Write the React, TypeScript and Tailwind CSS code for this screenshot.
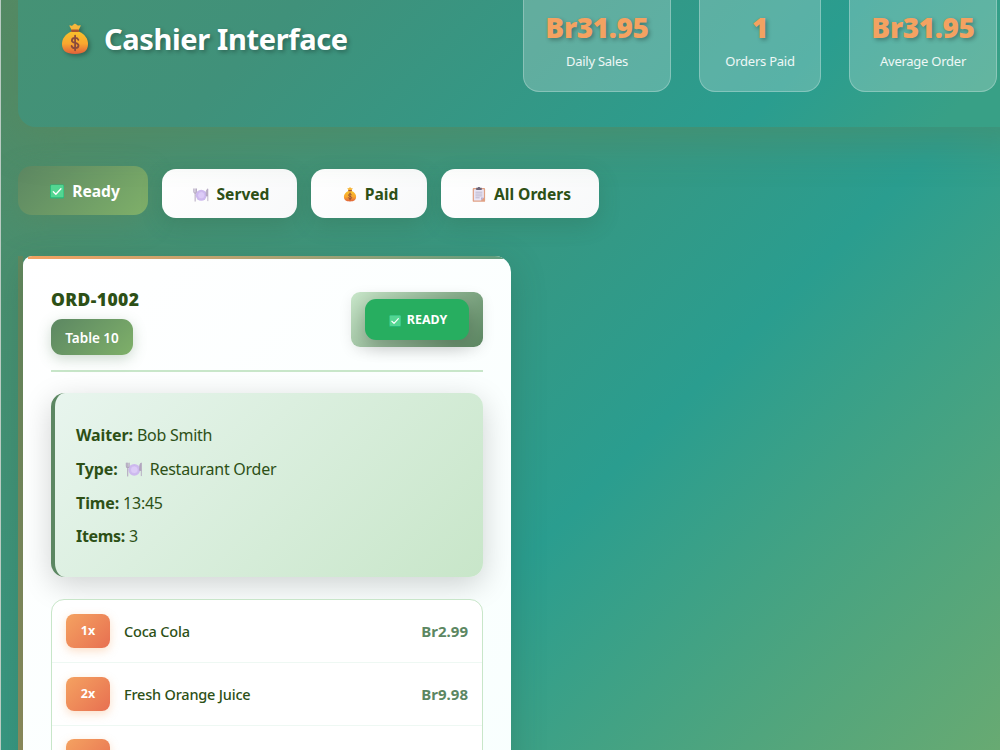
import React from 'react';

interface IconProps {
  className?: string;
}

interface OrderItem {
  qty: number;
  name: string;
  price: string;
}

const MoneyBagIcon: React.FC<IconProps> = ({ className }) => (
  <svg viewBox="0 0 28 32" fill="none" className={className}>
    <defs>
      <linearGradient id="bag" x1="14" y1="8" x2="14" y2="31" gradientUnits="userSpaceOnUse">
        <stop stopColor="#f9c22b" />
        <stop offset="0.55" stopColor="#f9a72f" />
        <stop offset="1" stopColor="#e0603a" />
      </linearGradient>
    </defs>
    <path d="M9.2 2.2c1.6 1 2.3.5 3-.4.7-1 2.3-1.7 3.3-.3.7 1 1.6 1.5 3.4.7.8-.2 1 .4.6 1L17.2 8h-6L8.6 3.2c-.3-.7 0-1.200.6-1Z" fill="#f6b73c" />
    <path d="M10.500 8.500h7.200c6 2.500 9.300 7 9.300 12.500 0 6.500-3.800 10-13 10S1 27.500 1 21c0-5.500 3.500-10 9.500-12.500Z" fill="url(#bag)" />
    <rect x="10" y="6.500" width="8.200" height="2.400" rx="1.200" fill="#a8552f" />
    <path d="M17.300 16.800c-.5-1.300-1.700-1.900-3.200-1.900-1.800 0-3.200.9-3.200 2.500 0 3.500 6.600 1.600 6.600 5.200 0 1.700-1.500 2.600-3.300 2.600-1.900 0-3.200-.8-3.600-2.300M14.100 12.700v14.600" stroke="#8a4b3c" strokeWidth="1.800" strokeLinecap="round" />
  </svg>
);

const CheckIcon: React.FC<IconProps> = ({ className }) => (
  <svg viewBox="0 0 16 16" fill="none" className={className}>
    <rect width="16" height="16" rx="1.500" fill="#27b879" />
    <rect x="1" y="0.600" width="14.400" height="14" rx="1" fill="#53d692" />
    <path d="M3.800 8.300 6.700 11.100 12.500 4.800" stroke="#fff" strokeWidth="1.500" strokeLinecap="round" strokeLinejoin="round" />
  </svg>
);

const PlateIcon: React.FC<IconProps> = ({ className }) => (
  <svg viewBox="0 0 18 16" fill="none" className={className}>
    <circle cx="9.300" cy="8.300" r="6.300" fill="#cdb9ee" />
    <circle cx="9.300" cy="8.300" r="4" fill="#dccbf7" stroke="#c8b4ea" strokeWidth="0.500" />
    <path d="M.8 1v3.500c0 1 .6 1.500 1.500 1.500s1.500-.5 1.500-1.500V1M2.300 1v14" stroke="#b0a3bd" strokeWidth="1.100" strokeLinecap="round" />
    <path d="M16.800 15V1c-1.300.5-1.800 2-1.800 4.500V9h1.800" fill="#b6a8c2" stroke="#b0a3bd" strokeWidth="0.900" strokeLinejoin="round" />
  </svg>
);

const ClipboardIcon: React.FC<IconProps> = ({ className }) => (
  <svg viewBox="0 0 14 16" fill="none" className={className}>
    <rect x="0.300" y="1" width="13.200" height="14.800" rx="1" fill="#e0a184" />
    <path d="M1.600 2.300h10.600v9l-3.100 3.200H1.600Z" fill="#e9e5f5" />
    <path d="M12.200 11.300H9.100v3.200Z" fill="#b9aed2" />
    <path d="M4 .9h1.500a1.500 1.500 0 0 1 2.800 0h1.600v2.400H4Z" fill="#6c6478" />
    <path d="M3.200 5.500h7.400M3.200 7.500h7.400M3.200 9.500h7.400M3.200 11.500h4.500" stroke="#a9a0bb" strokeWidth="0.700" />
  </svg>
);

const stats = [
  { value: 'Br31.95', label: 'Daily Sales', width: 'w-[148px]' },
  { value: '1', label: 'Orders Paid', width: 'w-[122px]' },
  { value: 'Br31.95', label: 'Average Order', width: 'w-[148px]' },
];

const tabs = [
  { label: 'Served', width: 'w-[135px]', icon: <PlateIcon className="w-4 h-3.5" /> },
  { label: 'Paid', width: 'w-[116px]', icon: <MoneyBagIcon className="w-[14px] h-[15px]" /> },
  { label: 'All Orders', width: 'w-[158px]', icon: <ClipboardIcon className="w-[14px] h-[15px]" /> },
];

const items: OrderItem[] = [
  { qty: 1, name: 'Coca Cola', price: 'Br2.99' },
  { qty: 2, name: 'Fresh Orange Juice', price: 'Br9.98' },
];

const Header = () => (
  <header className="relative flex justify-between h-[127px] w-[1016px] shrink-0 rounded-bl-[18px] bg-[linear-gradient(135deg,#459275_0px,#40917a_200px,#2a9d8f_600px,#38a086_740px)] shadow-[0_14px_42px_rgba(92,132,85,0.42)]">
    <div className="flex items-center gap-[15px] h-[77px] pl-[43px]">
      <MoneyBagIcon className="w-7 h-8 drop-shadow-[2px_2px_2px_rgba(0,0,0,0.3)]" />
      <h1 className="pb-px text-[29px] leading-none font-bold text-white tracking-[-0.35px] [text-shadow:2px_2px_4px_rgba(0,0,0,0.3)]">
        Cashier Interface
      </h1>
    </div>
    <div className="flex gap-7 pr-[37px]">
      {stats.map((stat) => (
        <div
          key={stat.label}
          className={`${stat.width} h-[92px] rounded-b-2xl border border-t-0 border-white/25 bg-white/22 text-center`}
        >
          <div className="mt-[11px] h-8 leading-8 text-[28px] font-black text-[#f4a261] tracking-[-0.35px] [text-shadow:2px_2px_4px_rgba(0,0,0,0.3)]">
            {stat.value}
          </div>
          <div className="mt-2 leading-5 text-[13px] tracking-[-0.25px] text-white/90">{stat.label}</div>
        </div>
      ))}
    </div>
  </header>
);

const Tabs = () => (
  <nav className="flex gap-3.5 mt-[42px] text-[15.600px] font-bold">
    <button className="flex items-center justify-center gap-2 w-[130px] h-[49px] -mt-[3px] pl-[4px] pt-[2px] rounded-[14px] text-white bg-linear-135 from-[#5c8762] to-[#7fb069] shadow-[0_8px_28px_rgba(92,133,90,0.4)]">
      <CheckIcon className="w-[14px] h-[15px]" />
      <span>Ready</span>
    </button>
    {tabs.map((tab) => (
      <button
        key={tab.label}
        className={`${tab.width} flex items-center justify-center gap-2 h-[49px] pl-[3px] pt-[2px] rounded-[14px] text-[#2d5016] bg-linear-135 from-white to-[#f8f9fa] shadow-[0_7px_22px_rgba(45,80,50,0.2)]`}
      >
        {tab.icon}
        <span>{tab.label}</span>
      </button>
    ))}
  </nav>
);

const QtyBadge: React.FC<{ children?: React.ReactNode }> = ({ children }) => (
  <span className="flex items-center justify-center w-[44px] h-[34px] pt-px rounded-lg text-[12.500px] font-bold text-white bg-linear-135 from-[#f4a261] to-[#e76f51] shadow-[0_3px_10px_rgba(244,162,97,0.35)]">
    {children}
  </span>
);

const OrderCard = () => (
  <section className="flex mt-[38px] w-[493px] h-[560px]">
    <div className="w-[5px] bg-[linear-gradient(180deg,#62895f_0px,#948f5f_494px)]" />
    <div className="flex-1 rounded-tl-[9px] rounded-tr-2xl overflow-hidden bg-linear-135 from-white to-[#f8fffe] shadow-[0_10px_34px_rgba(45,80,50,0.25)]">
      <div className="ml-[5px] h-[3px] bg-linear-to-r from-[#f4a261] to-[#5b9d7e]" />
      <div className="px-7 pt-[33px]">
        <div className="flex justify-between h-[80px] border-b-2 border-[#c8e6c9]">
          <div>
            <h2 className="h-[15px] leading-[14px] text-[17.500px] tracking-[0.400px] font-black text-[#2d5016]">ORD-1002</h2>
            <div className="mt-[12px] w-[82px] h-9 leading-[38px] rounded-[11px] text-center text-[13.500px] font-semibold text-white bg-linear-135 from-[#5c8762] to-[#7fb069] shadow-[0_4px_14px_rgba(92,133,98,0.3)]">
              Table 10
            </div>
          </div>
          <div className="w-[132px] h-[55px] px-3.5 py-[7px] rounded-[9px] bg-linear-135 from-[#c8e6c9] to-[#5c8762] shadow-[0_4px_14px_rgba(0,0,0,0.08)]">
            <div className="flex items-center justify-center gap-1.5 h-[41px] pl-[2px] pt-[2px] rounded-[11px] bg-[#27ae60] text-[12.400px] font-bold text-white shadow-[0_6px_18px_rgba(0,0,0,0.2)]">
              <CheckIcon className="w-3 h-3" />
              <span>READY</span>
            </div>
          </div>
        </div>

        <div className="mt-[21px] h-[184px] pl-[21px] pt-[26px] rounded-[14px] border-l-4 border-[#5c8762] bg-linear-135 from-[#e8f5ee] to-[#c8e6c9] text-[16px] leading-[33.800px] tracking-[-0.250px] text-[#2d5016] shadow-[0_8px_30px_rgba(0,0,0,0.18)]">
          <p><strong className="tracking-[-0.100px]">Waiter:</strong> Bob Smith</p>
          <p className="flex items-center">
            <strong className="tracking-[-0.100px]">Type:</strong>
            <PlateIcon className="w-[18px] h-[15px] ml-[7px] mr-[7px]" />
            Restaurant Order
          </p>
          <p><strong className="tracking-[-0.100px]">Time:</strong> 13:45</p>
          <p><strong className="tracking-[-0.300px]">Items:</strong> 3</p>
        </div>

        {/* Ordered items */}
        <div className="relative mt-[22px] rounded-[13px] border border-[#c8e6c9] bg-white overflow-hidden">
          {items.map((item) => (
            <div key={item.name} className="flex items-center h-[63px] px-3.5 border-b border-[#eef8f3]">
              <QtyBadge>{item.qty}x</QtyBadge>
              <span className="ml-3.5 flex-1 pt-px text-[14.500px] tracking-[-0.200px] font-medium text-[#2d5016]">{item.name}</span>
              <span className="text-[15px] font-bold text-[#5c8762]">{item.price}</span>
            </div>
          ))}
          <div className="h-[63px] px-3.5 pt-[13px]">
            <QtyBadge />
          </div>
        </div>
      </div>
    </div>
  </section>
);

const App: React.FC = () => {
  return (
    <div className="w-[1000px] h-[750px] overflow-hidden border-l border-[#b9cbc2] pl-[17px] font-['Noto_Sans','Open_Sans',sans-serif] bg-[linear-gradient(135deg,#548a64_0px,#2a9d8f_765px,#68aa72_1237px)]">
      <Header />
      <Tabs />
      <OrderCard />
    </div>
  );
};

export default App;
